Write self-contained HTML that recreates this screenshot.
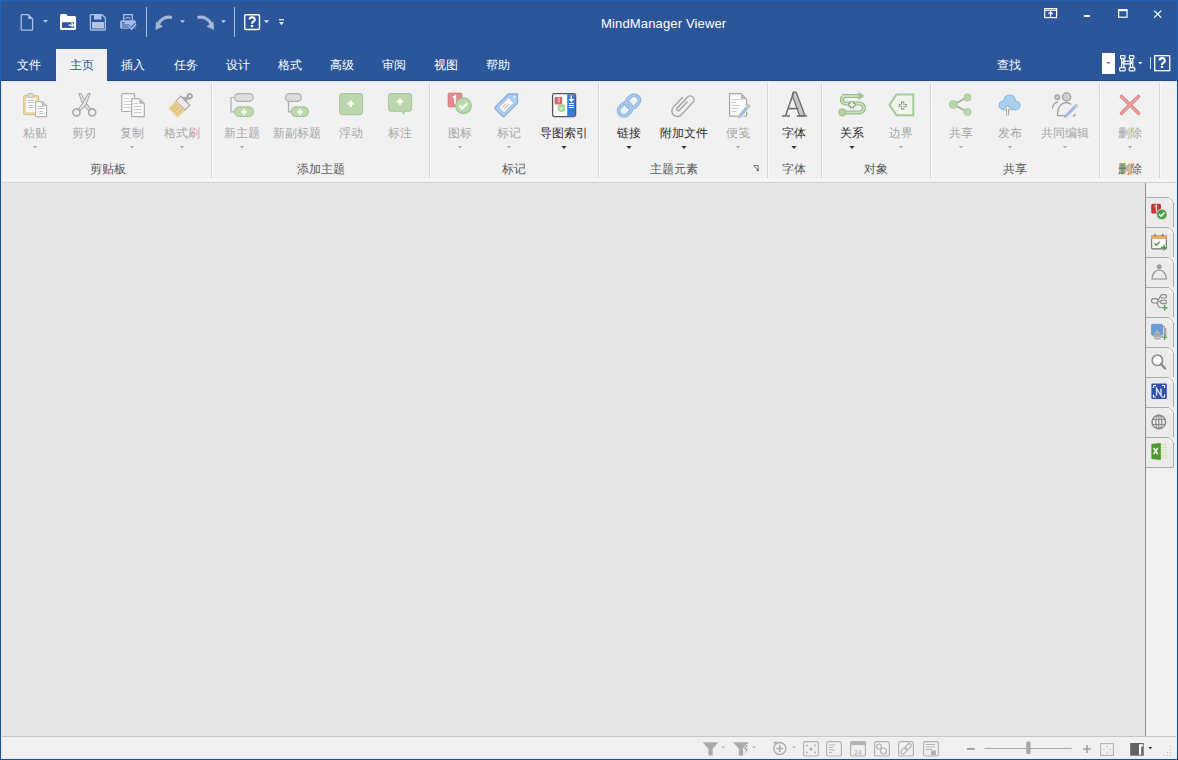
<!DOCTYPE html>
<html><head><meta charset="utf-8">
<style>
*{box-sizing:border-box}
html,body{margin:0;padding:0;width:1178px;height:760px;overflow:hidden;font-family:"Liberation Sans",sans-serif;}
body{position:relative;background:#2b579a}
.a{position:absolute}
.t{position:absolute;font-size:12px;line-height:20px;white-space:nowrap;transform:translateX(-50%)}
.tab{top:55px;color:#fff}
.lbl{top:123px;color:#a6a6a6}
.lbl.en{color:#2e2e2e}
.glbl{top:159px;color:#585858}
#ribbon{left:1px;top:81px;width:1175px;height:102px;background:#f1f1f1;border-bottom:1px solid #d2d2d2}
.sep{position:absolute;top:83px;width:1px;height:95px;background:#d6d6d6;box-shadow:1px 0 0 #fafafa}
#canvas{left:1px;top:183px;width:1144px;height:553px;background:#e6e6e6}
#side{left:1145px;top:183px;width:31px;height:553px;background:#f0f0f0;border-left:1px solid #8f8f8f}
#status{left:1px;top:736px;width:1175px;height:23px;background:#f0f0f0;border-top:1px solid #c6c6c6}
svg{position:absolute;left:0;top:0}
</style></head><body>
<div class="a" style="left:0;top:0;width:1178px;height:1px;background:#2262b8"></div>
<div class="a" style="left:0;top:0;width:1px;height:81px;background:#2262b8"></div>
<div class="a" style="left:1177px;top:0;width:1px;height:81px;background:#2262b8"></div>
<div class="a" style="left:601px;top:16px;font-size:13px;letter-spacing:0.15px;line-height:16px;color:#fff;white-space:nowrap">MindManager Viewer</div>

<div class="a" style="left:56px;top:49px;width:51px;height:33px;background:#f1f1f1"></div>
<div class="t tab" style="left:29px">文件</div>
<div class="t tab" style="left:82px;color:#2b579a">主页</div>
<div class="t tab" style="left:133px">插入</div>
<div class="t tab" style="left:186px">任务</div>
<div class="t tab" style="left:238px">设计</div>
<div class="t tab" style="left:290px">格式</div>
<div class="t tab" style="left:342px">高级</div>
<div class="t tab" style="left:394px">审阅</div>
<div class="t tab" style="left:446px">视图</div>
<div class="t tab" style="left:498px">帮助</div>
<div class="t tab" style="left:1009px">查找</div>

<div class="a" id="ribbon"></div>
<div class="a" style="left:1px;top:80px;width:55px;height:1px;background:#23497e"></div>
<div class="a" style="left:107px;top:80px;width:1069px;height:1px;background:#23497e"></div>
<div class="a" style="left:2px;top:81px;width:54px;height:2px;background:#e6eff9"></div>
<div class="a" style="left:107px;top:81px;width:1069px;height:2px;background:#e6eff9"></div>
<div class="a" style="left:2px;top:179px;width:1174px;height:2px;background:#f7f7f7"></div>
<div class="sep" style="left:211px"></div>
<div class="sep" style="left:429px"></div>
<div class="sep" style="left:598px"></div>
<div class="sep" style="left:767px"></div>
<div class="sep" style="left:821px"></div>
<div class="sep" style="left:930px"></div>
<div class="sep" style="left:1099px"></div>
<div class="sep" style="left:1159px"></div>

<div class="t lbl" style="left:35px">粘贴</div>
<div class="t lbl" style="left:84px">剪切</div>
<div class="t lbl" style="left:132px">复制</div>
<div class="t lbl" style="left:182px">格式刷</div>
<div class="t glbl" style="left:108px">剪贴板</div>

<div class="t lbl" style="left:242px">新主题</div>
<div class="t lbl" style="left:297px">新副标题</div>
<div class="t lbl" style="left:351px">浮动</div>
<div class="t lbl" style="left:400px">标注</div>
<div class="t glbl" style="left:321px">添加主题</div>

<div class="t lbl" style="left:460px">图标</div>
<div class="t lbl" style="left:509px">标记</div>
<div class="t lbl en" style="left:564px">导图索引</div>
<div class="t glbl" style="left:514px">标记</div>

<div class="t lbl en" style="left:629px">链接</div>
<div class="t lbl en" style="left:684px">附加文件</div>
<div class="t lbl" style="left:738px">便笺</div>
<div class="t glbl" style="left:674px">主题元素</div>

<div class="t lbl en" style="left:794px">字体</div>
<div class="t glbl" style="left:794px">字体</div>

<div class="t lbl en" style="left:852px">关系</div>
<div class="t lbl" style="left:901px">边界</div>
<div class="t glbl" style="left:876px">对象</div>

<div class="t lbl" style="left:961px">共享</div>
<div class="t lbl" style="left:1010px">发布</div>
<div class="t lbl" style="left:1065px">共同编辑</div>
<div class="t glbl" style="left:1015px">共享</div>

<div class="t lbl" style="left:1130px">删除</div>
<div class="t glbl" style="left:1130px">删除</div>

<div class="a" id="canvas"></div>
<div class="a" id="side"></div>
<div class="a" id="status"></div>
<div class="a" style="left:1px;top:81px;width:1px;height:678px;background:#d8f0fc"></div>
<div class="a" style="left:1176px;top:81px;width:1px;height:678px;background:#d8f0fc"></div>
<div class="a" style="left:1px;top:758px;width:1176px;height:1px;background:#dceef8"></div>
<div class="a" style="left:0;top:81px;width:1px;height:679px;background:#224e82"></div>
<div class="a" style="left:1177px;top:81px;width:1px;height:679px;background:#224e82"></div>
<div class="a" style="left:0;top:759px;width:1178px;height:1px;background:#224e82"></div>

<svg width="1178" height="760" viewBox="0 0 1178 760">
<!--ICONS-->
<!-- QAT -->
<g fill="none" stroke="#a7bfe6" stroke-width="1.3">
<path d="M22,14.7 h6.3 l4.3,4.3 v10.4 a0.8,0.8 0 0 1 -0.8,0.8 h-9.8 a0.8,0.8 0 0 1 -0.8,-0.8 v-13.9 a0.8,0.8 0 0 1 0.8,-0.8 z"/>
</g>
<path d="M28.3,14.7 v4.3 h4.3 z" fill="#a7bfe6"/>
<polygon points="43,20 48,20 45.5,22.8" fill="#b9cbec"/>
<!-- folder -->
<path d="M60,15.5 a1.5,1.5 0 0 1 1.5,-1.5 h4.5 l1.8,2 h6.7 a1.5,1.5 0 0 1 1.5,1.5 v11 a1.5,1.5 0 0 1 -1.5,1.5 h-13 a1.5,1.5 0 0 1 -1.5,-1.5 z" fill="#fff"/>
<rect x="62" y="22.3" width="12" height="5.6" fill="#2b579a"/>
<path d="M68.5,25.1 h5 M71.5,23 l2,2.1 l-2,2.1" stroke="#fff" stroke-width="1.2" fill="none"/>
<!-- save -->
<path d="M91.2,14.7 h11 l3.1,3.1 v11.4 a0.8,0.8 0 0 1 -0.8,0.8 h-13.3 a0.8,0.8 0 0 1 -0.8,-0.8 v-13.7 a0.8,0.8 0 0 1 0.8,-0.8 z" fill="none" stroke="#a7bfe6" stroke-width="1.3"/>
<rect x="94" y="14.7" width="7.5" height="4.8" fill="#a7bfe6"/>
<rect x="92" y="22" width="12" height="6.5" fill="#b2c4e0"/>
<!-- print -->
<g fill="none" stroke="#a7bfe6" stroke-width="1.3">
<path d="M123.7,20.5 v-5.8 h8.6 v5.8"/>
<path d="M125.8,18.8 c1,-1.8 3,-1.8 4.2,0"/>
</g>
<rect x="120.2" y="20.2" width="15.6" height="8.6" rx="1.6" fill="#a7bfe6"/>
<path d="M122,22.9 h2.5 M122,25 h7.5 M122,27 h6" stroke="#2b579a" stroke-width="1.1"/>
<path d="M129.3,26.6 l2.3,2.5 l4.4,-4.9" stroke="#2b579a" stroke-width="3.6" fill="none"/>
<path d="M129.3,26.6 l2.3,2.5 l4.4,-4.9" stroke="#a7bfe6" stroke-width="1.7" fill="none"/>
<!-- separators -->
<rect x="146" y="7" width="1" height="30" fill="#a9c0e4"/>
<rect x="234" y="7" width="1" height="30" fill="#a9c0e4"/>
<!-- undo -->
<path d="M172,17.5 C166,16 160.5,19 158.5,24" stroke="#a3b6d6" stroke-width="3.2" fill="none"/>
<polygon points="155.5,30 156,21.5 163,26.5" fill="#a3b6d6"/>
<polygon points="180,20.3 185,20.3 182.5,23" fill="#b9cbec"/>
<!-- redo -->
<path d="M197.5,17.5 C203.5,16 209,19 211,24" stroke="#a3b6d6" stroke-width="3.2" fill="none"/>
<polygon points="214,30 213.5,21.5 206.5,26.5" fill="#a3b6d6"/>
<polygon points="221,20.3 226,20.3 223.5,23" fill="#b9cbec"/>
<!-- help -->
<rect x="244.7" y="14.7" width="14.8" height="14.8" rx="1.2" fill="none" stroke="#fff" stroke-width="1.4"/>
<path d="M249.7,19.5 a2.5,2.3 0 1 1 3.6,2.1 c-1,0.6 -1.3,1 -1.3,2.2" stroke="#fff" stroke-width="2" fill="none"/>
<rect x="250.8" y="25" width="2.4" height="2.2" fill="#fff"/>
<polygon points="264,20.3 269,20.3 266.5,23" fill="#dfe8f7"/>
<rect x="279" y="19" width="5" height="1.3" fill="#dfe8f7"/>
<polygon points="279,22 284,22 281.5,25.3" fill="#dfe8f7"/>
<!-- window controls -->
<g fill="none" stroke="#fff" stroke-width="1.2">
<rect x="1044.6" y="8.6" width="12" height="9"/>
<path d="M1044,10.3 h13.2"/>
<path d="M1050.6,17.4 v-5.5 M1048.4,14.1 l2.2,-2.2 l2.2,2.2"/>
<rect x="1118.6" y="9.6" width="8.4" height="7.6"/>
<path d="M1118,10.6 h9.6"/>
<path d="M1154.2,10.6 l7,7 M1161.2,10.6 l-7,7" stroke-width="1.3"/>
</g>
<rect x="1084" y="15" width="6" height="2" fill="#fff"/>
<!-- right of tab row -->
<rect x="1102" y="53" width="13" height="21" fill="#fff"/>
<polygon points="1106.5,62 1110.5,62 1108.5,64.5" fill="#777"/>
<g fill="none" stroke="#fff" stroke-width="1.2">
<rect x="1120.6" y="55.6" width="4.4" height="3" rx="0.6"/>
<rect x="1129.4" y="55.6" width="4.4" height="3" rx="0.6"/>
<path d="M1121.6,58.6 v9 M1124,58.6 v9 M1130.4,58.6 v9 M1132.8,58.6 v9"/>
<rect x="1122.6" y="61.2" width="9.2" height="2.6" rx="1.2"/>
<rect x="1119.6" y="67.6" width="5.6" height="3.2" rx="0.8"/>
<rect x="1129.2" y="67.6" width="5.6" height="3.2" rx="0.8"/>
</g>
<polygon points="1138.3,62 1142.3,62 1140.3,64.5" fill="#fff"/>
<rect x="1150" y="57" width="1" height="12" fill="#c8d6ee"/>
<rect x="1154.7" y="55.7" width="15" height="15" fill="none" stroke="#fff" stroke-width="1.3"/>
<path d="M1159.6,60.5 a2.6,2.4 0 1 1 3.7,2.2 c-1,0.6 -1.3,1 -1.3,2.3" stroke="#fff" stroke-width="2.1" fill="none"/>
<rect x="1160.9" y="65.8" width="2.2" height="2.2" fill="#fff"/>
<!--RIBBON-->
<!-- paste -->
<rect x="23.6" y="95.6" width="15" height="19" rx="1.5" fill="#e6d6a4" stroke="#dac78f" stroke-width="1.2"/>
<rect x="25.8" y="97.8" width="10.5" height="14.5" fill="#f8f8f6"/>
<rect x="28" y="93.6" width="5.5" height="3.6" rx="1" fill="#e2e2e2" stroke="#b5b5b5" stroke-width="1"/>
<path d="M28,100.5 h6 M28,102.5 h6 M29,105.5 h4 M29,107.5 h4" stroke="#c6c6c6" stroke-width="1"/>
<path d="M35.6,101.6 h6.8 l4.2,4.2 v10.8 h-11 z" fill="#fdfdfd" stroke="#b3b3b3" stroke-width="1.1"/>
<path d="M42.4,101.6 v4.2 h4.2" fill="#c8c8c8" stroke="#b3b3b3" stroke-width="0.9"/>
<path d="M37.5,106.5 h6 M37.5,108.5 h7 M39,111.5 h4 M39,113.5 h4" stroke="#c6c6c6" stroke-width="1"/>
<!-- scissors -->
<g stroke="#a9a9a9" stroke-width="1.1" fill="#ececec" stroke-linejoin="round">
<polygon points="78.8,93.6 80.8,93.6 86.6,103.8 90.6,109.4 89,110.6 83.4,105.2"/>
<polygon points="90.2,93.6 88.2,93.6 82.4,103.8 78.4,109.4 80,110.6 85.6,105.2"/>
</g>
<g stroke="#a9a9a9" stroke-width="1.7" fill="none">
<circle cx="76.4" cy="112.4" r="3.5"/>
<circle cx="92.2" cy="112.4" r="3.5"/>
</g>
<!-- copy -->
<rect x="121.7" y="93.7" width="12.8" height="17.8" rx="1" fill="#fdfdfd" stroke="#ababab" stroke-width="1.2"/>
<path d="M124,98.5 h5 M124,101.5 h7 M124,104.5 h7 M124,107.5 h7" stroke="#c8c8c8" stroke-width="1"/>
<path d="M131.7,98.7 h7.6 l5,5 v12.4 a0.6,0.6 0 0 1 -0.6,0.6 h-11.4 a0.6,0.6 0 0 1 -0.6,-0.6 z" fill="#fdfdfd" stroke="#ababab" stroke-width="1.2"/>
<path d="M139.3,98.7 v5 h5 z" fill="#b8b8b8"/>
<path d="M133.8,103.5 h4 M133.8,106.5 h8 M133.8,109.5 h8 M133.8,112.5 h8" stroke="#c8c8c8" stroke-width="1"/>
<!-- format painter -->
<g transform="rotate(45 180 106)">
<circle cx="180" cy="92.3" r="3.2" fill="#a9a9a9"/>
<circle cx="180" cy="92" r="1.1" fill="#f3f3f3"/>
<path d="M178.6,94.5 h2.8 v3 l4,1.5 h-13.6 l4,-1.5 z" fill="#acacac"/>
<rect x="173.6" y="98.6" width="12.8" height="6.6" fill="#ececec" stroke="#a6a6a6" stroke-width="1.1"/>
<path d="M173.2,105.4 h13.6 v9 a1.5,1.5 0 0 1 -1.5,1.5 h-10.6 a1.5,1.5 0 0 1 -1.5,-1.5 z" fill="#e8d095"/>
<path d="M176.5,107.5 v7 M180,107 v7.5 M183.5,107.5 v7" stroke="#d6b66e" stroke-width="1"/>
</g>
<!-- new topic -->
<path d="M234.6,97.5 h-3.6 v14.3 h3.6" stroke="#b0b0b0" stroke-width="1.2" fill="none"/>
<rect x="234.6" y="93.6" width="18.6" height="7.8" rx="3.9" fill="#dedede" stroke="#b3b3b3" stroke-width="1.2"/>
<rect x="234.6" y="106.9" width="19" height="9.6" rx="4.8" fill="#bdd7af" stroke="#aac79b" stroke-width="1.1"/>
<path d="M244,109 v6 M241,112 h6" stroke="#f4fbf0" stroke-width="2.2"/>
<!-- new subtopic -->
<path d="M288.5,101.4 v10.4 h3" stroke="#ababab" stroke-width="1.3" fill="none"/>
<rect x="285.5" y="93.6" width="15.8" height="7.8" rx="3.9" fill="#dcdcdc" stroke="#aeaeae" stroke-width="1.2"/>
<rect x="291.2" y="106.9" width="17.2" height="9.6" rx="4.8" fill="#bdd7af" stroke="#a6c497" stroke-width="1.1"/>
<path d="M300,109 v6 M297,112 h6" stroke="#f4fbf0" stroke-width="2.2"/>
<!-- floating -->
<rect x="339.6" y="93.6" width="23" height="21" rx="3" fill="#bcd6ae" stroke="#aac79b" stroke-width="1.1"/>
<path d="M350.8,100.5 v6.5 M347.5,103.7 h6.5" stroke="#f6fbf3" stroke-width="2.2"/>
<!-- callout -->
<rect x="388.6" y="93.6" width="23" height="17.6" rx="3" fill="#bcd6ae" stroke="#aac79b" stroke-width="1.1"/>
<path d="M400.5,110.5 l3.5,5 l1.5,-5 z" fill="#b5d2a6"/>
<path d="M400,98.5 v6.5 M396.7,101.7 h6.5" stroke="#f6fbf3" stroke-width="2.2"/>
<!-- icons -->
<rect x="448.2" y="93.2" width="13.6" height="13.6" rx="1" fill="#e48a8c" stroke="#d67476" stroke-width="1"/>
<path d="M452.8,97.6 l2.3,-1.4 v8" stroke="#fff3f3" stroke-width="2" fill="none"/>
<circle cx="463.5" cy="105.7" r="7.8" fill="#bad8ab" stroke="#a5c597" stroke-width="1.3"/>
<path d="M459.5,105.6 l2.8,2.8 l5,-5.2" stroke="#f6fff2" stroke-width="2.2" fill="none"/>
<!-- tag -->
<g transform="rotate(-45 509 102.5)">
<path d="M496.5,96 h18 l6.5,6.5 l-6.5,6.5 h-18 a1.8,1.8 0 0 1 -1.8,-1.8 v-9.4 a1.8,1.8 0 0 1 1.8,-1.8 z" fill="#aecdf0" stroke="#8ab2de" stroke-width="1.3"/>
<rect x="498.2" y="98.6" width="14" height="7.8" rx="0.8" fill="#f3f8fd" stroke="#8ab2de" stroke-width="0.7"/>
<path d="M501,101 h5 M501,103.5 h7" stroke="#e4b9a6" stroke-width="1.1"/>
<circle cx="516.8" cy="102.5" r="1.2" fill="#eaf3fc"/>
</g>
<!-- map index -->
<rect x="552.6" y="93.6" width="23" height="23" rx="1.8" fill="#fff" stroke="#555" stroke-width="1.3"/>
<path d="M567.2,94.2 h6.6 a1.2,1.2 0 0 1 1.2,1.2 v20 a1.2,1.2 0 0 1 -1.2,1.2 h-6.6 z" fill="#3d7ad3"/>
<path d="M571.3,95.5 v5.5" stroke="#fff" stroke-width="1.4"/>
<polygon points="568.3,99 574.3,99 571.3,102.3" fill="#fff"/>
<path d="M568.8,103.5 h5 M568.8,105.5 h5 M568.8,107.5 h5" stroke="#fff" stroke-width="1"/>
<rect x="554.6" y="97" width="7.6" height="7.6" rx="0.8" fill="#d46a6c"/>
<path d="M557.8,99 l1.2,-0.7 v4.5" stroke="#fbe" stroke-width="1.2" fill="none"/>
<circle cx="561.5" cy="108" r="4" fill="#a6d796"/>
<path d="M559.8,108 l1.3,1.4 l2.2,-2.4" stroke="#eaffea" stroke-width="1.1" fill="none"/>
<!-- link -->
<g transform="rotate(-45 629 105.5)" fill="none">
<rect x="616.5" y="100.3" width="14" height="10.4" rx="5.2" stroke="#8db3dc" stroke-width="3.8"/>
<rect x="627.5" y="100.3" width="14" height="10.4" rx="5.2" stroke="#8db3dc" stroke-width="3.8"/>
<rect x="616.5" y="100.3" width="14" height="10.4" rx="5.2" stroke="#a6cbef" stroke-width="1.9"/>
<rect x="627.5" y="100.3" width="14" height="10.4" rx="5.2" stroke="#a6cbef" stroke-width="1.9"/>
</g>
<!-- paperclip -->
<g transform="rotate(43 684 105.2)" fill="none" stroke="#a9a9a9" stroke-width="1.5">
<path d="M681,112 V97 a3.8,3.8 0 0 1 7.6,0 V114 a5.5,5.5 0 0 1 -11,0 V100"/>
<path d="M681,112 a1.5,1.5 0 0 0 3,0 V100"/>
</g>
<!-- note -->
<path d="M729.6,93.6 h11.4 l5.6,5.6 v16.4 a0.6,0.6 0 0 1 -0.6,0.6 h-15.8 a0.6,0.6 0 0 1 -0.6,-0.6 z" fill="#fdfdfd" stroke="#a8a8a8" stroke-width="1.3"/>
<path d="M741,93.6 v5.6 h5.6 z" fill="#b8b8b8"/>
<path d="M731.5,99.5 h10 M731.5,102.5 h4 M731.5,105.5 h8 M731.5,108.5 h7 M731.5,111.5 h5" stroke="#c4c4c4" stroke-width="0.9"/>
<g transform="rotate(-50 744.5 110.5)">
<rect x="737" y="108.6" width="12" height="4" fill="#9ebbe2" stroke="#f4f8fc" stroke-width="0.8"/>
<rect x="749" y="108.6" width="3" height="4" fill="#c8c4b8"/>
<polygon points="737,108.6 734,110.6 737,112.6" fill="#b8b8b8"/>
</g>
<!-- font A -->
<polygon points="793.2,92.2 796.2,92.2 805,115.6 799.6,115.6 792.3,95.6" fill="#c4c4c4" stroke="#6c6c6c" stroke-width="1.3" stroke-linejoin="round"/>
<path d="M793.6,92.6 L785.6,115.6" stroke="#6c6c6c" stroke-width="1.5"/>
<path d="M788.6,108.6 h9.6" stroke="#6c6c6c" stroke-width="1.6"/>
<path d="M782,116 h8 M796.8,116 h10" stroke="#6c6c6c" stroke-width="1.7"/>
<!-- relationship -->
<g fill="none">
<path d="M842,96 h19 M845.5,96 a3.75,3.75 0 0 0 0,7.5 h14 a4.45,4.45 0 0 1 0,8.9 h-17" stroke="#9ab98c" stroke-width="4"/>
<path d="M842,96 h19 M845.5,96 a3.75,3.75 0 0 0 0,7.5 h14 a4.45,4.45 0 0 1 0,8.9 h-17" stroke="#c8e0bc" stroke-width="1.8"/>
</g>
<polygon points="858.5,91.8 864.5,96 858.5,100.2" fill="#a5c497"/>
<circle cx="842.3" cy="112.4" r="3.7" fill="#b3d0a5" stroke="#9ab98c" stroke-width="0.8"/>
<path d="M851.8,101.2 v7 M848.3,104.7 h7" stroke="#7f9a74" stroke-width="3.8"/>
<path d="M851.8,102.1 v5.2 M849.2,104.7 h5.2" stroke="#f6fbf2" stroke-width="1.9"/>
<!-- boundary -->
<path d="M896.5,94.6 h16.8 v20.6 h-16.8 l-7,-10.3 z" fill="#eef6ea" stroke="#a9c89a" stroke-width="2"/>
<path d="M902.7,101.5 v8 M898.7,105.5 h8" stroke="#8a8a8a" stroke-width="3.2"/>
<path d="M902.7,102.5 v6 M899.7,105.5 h6" stroke="#fff" stroke-width="1.4"/>
<!-- share -->
<path d="M953.3,104.5 L967.5,97.4 M953.3,104.5 L967.5,112" stroke="#9cb08f" stroke-width="1.6"/>
<circle cx="967.5" cy="97.4" r="3.6" fill="#b9d8a9" stroke="#a6c698" stroke-width="0.8"/>
<circle cx="953.3" cy="104.5" r="4" fill="#b9d8a9" stroke="#a6c698" stroke-width="0.8"/>
<circle cx="967.5" cy="112" r="3.6" fill="#b9d8a9" stroke="#a6c698" stroke-width="0.8"/>
<!-- publish -->
<g fill="#a9cff2" stroke="#8fb6de" stroke-width="1.2">
<circle cx="1003.5" cy="105.3" r="4.3"/>
<circle cx="1015.6" cy="105.3" r="4.3"/>
<circle cx="1009.6" cy="100.8" r="5.8"/>
</g>
<g fill="#a9cff2">
<circle cx="1003.5" cy="105.3" r="3.7"/>
<circle cx="1015.6" cy="105.3" r="3.7"/>
<circle cx="1009.6" cy="100.8" r="5.2"/>
<rect x="1003.5" y="101" width="12" height="8"/>
</g>
<path d="M1003.5,109.6 h12" stroke="#8fb6de" stroke-width="1.2"/>
<path d="M1007.6,115.2 v-8.2 M1004.6,109.8 l3,-3.2 l3,3.2" stroke="#9c9c9c" stroke-width="2.8" fill="none" stroke-linejoin="round"/>
<path d="M1007.6,115.2 v-8.2 M1004.6,109.8 l3,-3.2 l3,3.2" stroke="#f6f6f6" stroke-width="1.1" fill="none"/>
<!-- co-edit -->
<circle cx="1057.3" cy="97.2" r="2.4" fill="#c8c8c8" stroke="#a0a0a0" stroke-width="1.1"/>
<circle cx="1066.6" cy="97" r="4.1" fill="#d0d0d0" stroke="#a0a0a0" stroke-width="1.3"/>
<g fill="none" stroke="#a4a4a4" stroke-width="1.3">
<path d="M1052.6,108.5 a5.5,6.5 0 0 1 5.5,-6.5"/>
<path d="M1057.6,115.6 v-2.5 a8.6,10.5 0 0 1 17.2,0 v2.5 z"/>
</g>
<g transform="rotate(-45 1071.5 110.5)">
<rect x="1063.5" y="106" width="16" height="9" fill="#f1f1f1"/>
<rect x="1064" y="108.6" width="13" height="3.6" fill="#9cbae2" stroke="#eef4fb" stroke-width="0.6"/>
<rect x="1077" y="108.6" width="2.5" height="3.6" fill="#c0c0c0"/>
<polygon points="1064,108.6 1061,110.4 1064,112.2" fill="#a8a8a8"/>
</g>
<!-- delete -->
<path d="M1121.5,96.5 L1138.5,113.3 M1138.5,96.5 L1121.5,113.3" stroke="#d88486" stroke-width="3.6" stroke-linecap="round"/>
<path d="M1121.5,96.5 L1138.5,113.3 M1138.5,96.5 L1121.5,113.3" stroke="#ec9fa1" stroke-width="1.8" stroke-linecap="round"/>
<!-- dropdown arrows -->
<g fill="#ababab">
<polygon points="32.8,146 37.2,146 35.0,148.3"/>
<polygon points="129.8,146 134.2,146 132.0,148.3"/>
<polygon points="179.8,146 184.2,146 182.0,148.3"/>
<polygon points="239.8,146 244.2,146 242.0,148.3"/>
<polygon points="457.8,146 462.2,146 460.0,148.3"/>
<polygon points="506.8,146 511.2,146 509.0,148.3"/>
<polygon points="735.8,146 740.2,146 738.0,148.3"/>
<polygon points="898.8,146 903.2,146 901.0,148.3"/>
<polygon points="958.8,146 963.2,146 961.0,148.3"/>
<polygon points="1007.8,146 1012.2,146 1010.0,148.3"/>
<polygon points="1062.8,146 1067.2,146 1065.0,148.3"/>
<polygon points="1127.8,146 1132.2,146 1130.0,148.3"/>
</g>
<g fill="#333">
<polygon points="561.4,146 566.6,146 564.0,149"/>
<polygon points="626.4,146 631.6,146 629.0,149"/>
<polygon points="681.4,146 686.6,146 684.0,149"/>
<polygon points="791.4,146 796.6,146 794.0,149"/>
<polygon points="849.4,146 854.6,146 852.0,149"/>
</g>
<!-- dialog launcher -->
<path d="M753.5,165.5 h4.5 v4.5 M754,166 l4,4" stroke="#777" stroke-width="1" fill="none"/>
<polygon points="759,171 759,168 756,171" fill="#777"/>
<!--SIDE-->
<path d="M1146,197.5 h22.5 l5,5 v24.5" fill="#ebebeb" stroke="#ababab" stroke-width="1"/>
<rect x="1146" y="198" width="27.5" height="29" fill="#ebebeb"/>
<path d="M1146,197.5 h22.5 l5,5 v24.5" fill="none" stroke="#ababab" stroke-width="1"/>
<path d="M1168.5,197.5 v5.5 h5" fill="#f6f6f6" stroke="none"/>
<path d="M1146,227.5 h22.5 l5,5 v24.5" fill="#ebebeb" stroke="#ababab" stroke-width="1"/>
<rect x="1146" y="228" width="27.5" height="29" fill="#ebebeb"/>
<path d="M1146,227.5 h22.5 l5,5 v24.5" fill="none" stroke="#ababab" stroke-width="1"/>
<path d="M1168.5,227.5 v5.5 h5" fill="#f6f6f6" stroke="none"/>
<path d="M1146,257.5 h22.5 l5,5 v24.5" fill="#ebebeb" stroke="#ababab" stroke-width="1"/>
<rect x="1146" y="258" width="27.5" height="29" fill="#ebebeb"/>
<path d="M1146,257.5 h22.5 l5,5 v24.5" fill="none" stroke="#ababab" stroke-width="1"/>
<path d="M1168.5,257.5 v5.5 h5" fill="#f6f6f6" stroke="none"/>
<path d="M1146,287.5 h22.5 l5,5 v24.5" fill="#ebebeb" stroke="#ababab" stroke-width="1"/>
<rect x="1146" y="288" width="27.5" height="29" fill="#ebebeb"/>
<path d="M1146,287.5 h22.5 l5,5 v24.5" fill="none" stroke="#ababab" stroke-width="1"/>
<path d="M1168.5,287.5 v5.5 h5" fill="#f6f6f6" stroke="none"/>
<path d="M1146,317.5 h22.5 l5,5 v24.5" fill="#ebebeb" stroke="#ababab" stroke-width="1"/>
<rect x="1146" y="318" width="27.5" height="29" fill="#ebebeb"/>
<path d="M1146,317.5 h22.5 l5,5 v24.5" fill="none" stroke="#ababab" stroke-width="1"/>
<path d="M1168.5,317.5 v5.5 h5" fill="#f6f6f6" stroke="none"/>
<path d="M1146,347.5 h22.5 l5,5 v24.5" fill="#ebebeb" stroke="#ababab" stroke-width="1"/>
<rect x="1146" y="348" width="27.5" height="29" fill="#ebebeb"/>
<path d="M1146,347.5 h22.5 l5,5 v24.5" fill="none" stroke="#ababab" stroke-width="1"/>
<path d="M1168.5,347.5 v5.5 h5" fill="#f6f6f6" stroke="none"/>
<path d="M1146,377.5 h22.5 l5,5 v24.5" fill="#ebebeb" stroke="#ababab" stroke-width="1"/>
<rect x="1146" y="378" width="27.5" height="29" fill="#ebebeb"/>
<path d="M1146,377.5 h22.5 l5,5 v24.5" fill="none" stroke="#ababab" stroke-width="1"/>
<path d="M1168.5,377.5 v5.5 h5" fill="#f6f6f6" stroke="none"/>
<path d="M1146,407.5 h22.5 l5,5 v24.5" fill="#ebebeb" stroke="#ababab" stroke-width="1"/>
<rect x="1146" y="408" width="27.5" height="29" fill="#ebebeb"/>
<path d="M1146,407.5 h22.5 l5,5 v24.5" fill="none" stroke="#ababab" stroke-width="1"/>
<path d="M1168.5,407.5 v5.5 h5" fill="#f6f6f6" stroke="none"/>
<path d="M1146,437.5 h22.5 l5,5 v24.5" fill="#ebebeb" stroke="#ababab" stroke-width="1"/>
<rect x="1146" y="438" width="27.5" height="29" fill="#ebebeb"/>
<path d="M1146,437.5 h22.5 l5,5 v24.5" fill="none" stroke="#ababab" stroke-width="1"/>
<path d="M1168.5,437.5 v5.5 h5" fill="#f6f6f6" stroke="none"/>
<path d="M1146,467.5 h27.5" stroke="#ababab" stroke-width="1"/>
<!-- side icon 1: red 1 + check -->
<rect x="1151.2" y="203.8" width="9.8" height="9.8" rx="1.5" fill="#c2353b"/>
<path d="M1154.8,206.6 l1.6,-1 v6" stroke="#f8dada" stroke-width="1.4" fill="none"/>
<circle cx="1161.8" cy="214.4" r="5.3" fill="#4f9d4a" stroke="#ebebeb" stroke-width="0.8"/>
<path d="M1159.2,214.3 l1.8,1.9 l3.4,-3.6" stroke="#fff" stroke-width="1.6" fill="none"/>
<!-- calendar -->
<rect x="1151.7" y="235.7" width="14.6" height="13.2" rx="1" fill="#fff" stroke="#707070" stroke-width="1.1"/>
<rect x="1151.2" y="235.2" width="15.6" height="3.8" fill="#e6ab68"/>
<path d="M1155,233.8 v2.5 M1162.8,233.8 v2.5" stroke="#707070" stroke-width="1.2"/>
<path d="M1154.5,243.3 l2,2 l3.3,-3.6" stroke="#4b9a45" stroke-width="1.4" fill="none"/>
<path d="M1164,244.5 v6 M1161,247.5 h6" stroke="#4b9a45" stroke-width="1.3"/>
<!-- person -->
<circle cx="1159.2" cy="266.8" r="2.5" fill="#a2a2a2"/>
<path d="M1152,279 a7.2,9 0 0 1 14.4,0 z" fill="none" stroke="#8c8c8c" stroke-width="1.2"/>
<!-- map structure -->
<g fill="none" stroke="#8a8a8a" stroke-width="1.1">
<rect x="1151.5" y="298.6" width="6.6" height="4.4" rx="2.2"/>
<rect x="1160.6" y="294.6" width="6" height="3.4" rx="1.7"/>
<rect x="1160.6" y="300.2" width="6" height="3.4" rx="1.7"/>
<path d="M1158.1,300.8 c1.2,0 1,-4.5 2.5,-4.5 M1158.1,300.8 c1.2,0 1,1.1 2.5,1.1 M1157.5,303 c0,3 1,4.5 3.5,4.5"/>
</g>
<path d="M1164.6,304.8 v6 M1161.6,307.8 h6" stroke="#4b9a45" stroke-width="1.3"/>
<!-- image -->
<path d="M1162.5,326.5 h1.8 v10 M1165.8,328 v8.5" stroke="#8c8c8c" stroke-width="1" fill="none"/>
<path d="M1153.5,336.8 h9 M1154.5,338.8 h6" stroke="#8c8c8c" stroke-width="1"/>
<rect x="1151.5" y="324.3" width="11" height="11" rx="1" fill="#6a9ad8" stroke="#5a88c8" stroke-width="0.6"/>
<path d="M1153.5,334.5 l3.8,-5.2 l3.8,5.2 z" fill="#b4b0a8"/>
<path d="M1164.6,334.6 v5.4 M1161.9,337.3 h5.4" stroke="#4b9a45" stroke-width="1.1"/>
<!-- magnifier -->
<circle cx="1157.4" cy="360.3" r="5.2" fill="#fff" stroke="#8a8a8a" stroke-width="1.6"/>
<path d="M1161,364 l4,4.5" stroke="#8a8a8a" stroke-width="2.4" stroke-linecap="round"/>
<!-- N frame -->
<rect x="1151.4" y="383.5" width="15.4" height="15.4" rx="1" fill="#2f4fb0"/>
<path d="M1153.5,388 v-2.5 h2.5 M1162,385.5 h2.5 v2.5 M1164.5,394.5 v2.5 h-2.5 M1156,397 h-2.5 v-2.5" stroke="#fff" stroke-width="1.1" fill="none"/>
<path d="M1156.6,395.5 v-7 l4.4,7 v-7" stroke="#dfe6f6" stroke-width="1.4" fill="none"/>
<!-- globe -->
<circle cx="1158.8" cy="422" r="6.8" fill="none" stroke="#8a8a8a" stroke-width="1.5"/>
<ellipse cx="1158.8" cy="422" rx="3" ry="6.8" fill="none" stroke="#8a8a8a" stroke-width="1.2"/>
<path d="M1152.3,419.5 h13 M1152.3,424.5 h13 M1158.8,415.3 v13.4" stroke="#8a8a8a" stroke-width="1.2"/>
<!-- excel -->
<path d="M1160,445 h7 M1160,447.5 h7 M1160,450 h7 M1160,452.5 h7 M1160,455 h7 M1160,457.5 h7" stroke="#c8dc7a" stroke-width="1.2" stroke-dasharray="1.5 1"/>
<path d="M1151.4,444 l9.4,-1 v17 l-9.4,-1 z" fill="#4e9a2c"/>
<path d="M1153.6,447.8 l4.2,6.4 M1157.8,447.8 l-4.2,6.4" stroke="#fff" stroke-width="1.5"/>
<!--STATUS-->
<g fill="#ababab">
<path d="M702.6,742.2 h15.9 l-5.8,6.5 v6.7 h-4.3 v-6.7 z"/>
<polygon points="721.3,746.5 725.3,746.5 723.3,748.3"/>
<path d="M733,742.2 h15.9 l-5.8,6.5 v6.7 h-4.3 v-6.7 z"/>
<polygon points="752,746.5 756,746.5 754,748.3"/>
<polygon points="792,746.5 796,746.5 794,748.3"/>
<polygon points="1148.3,747 1152.3,747 1150.3,749.3" fill="#333"/>
</g>
<path d="M746.5,744.5 l-3.5,5.2 h2.6 l-1.8,5.8 l5,-6.8 h-2.6 l2.3,-4.2 z" fill="#9c9c9c" stroke="#f0f0f0" stroke-width="0.9"/>
<circle cx="779.8" cy="748.5" r="6" fill="none" stroke="#ababab" stroke-width="1.3"/>
<path d="M779.8,745 v7 M776.3,748.5 h7" stroke="#ababab" stroke-width="1.6"/>
<polygon points="773,741.8 777.5,741.5 775,744.5" fill="#ababab"/>
<g fill="none" stroke="#b3b3b3" stroke-width="1.2">
<rect x="803.6" y="741.6" width="14.8" height="14.4" rx="1.5"/>
<rect x="826.6" y="741.6" width="14.8" height="14.4" rx="1.5"/>
<rect x="850.6" y="741.6" width="14.8" height="14.4" rx="1.5"/>
<rect x="874.6" y="741.6" width="14.8" height="14.4" rx="1.5"/>
<rect x="898.6" y="741.6" width="14.8" height="14.4" rx="1.5"/>
<rect x="923.6" y="741.6" width="14.8" height="14.4" rx="1.5"/>
<path d="M829,745 h6 M829,747.5 h4 M829,750 h6 M829,752.5 h3"/>
<path d="M926,744.5 h9 M926,747 h9 M926,749.5 h6"/>
<circle cx="879" cy="746.5" r="2.5"/>
<circle cx="883.5" cy="751" r="3"/>
<g transform="rotate(-45 906 748.8)"><rect x="899.5" y="746.8" width="7" height="4" rx="2"/><rect x="905.5" y="746.8" width="7" height="4" rx="2"/></g>
</g>
<circle cx="811" cy="749" r="1.6" fill="#b3b3b3"/>
<circle cx="807" cy="745.5" r="1" fill="#b3b3b3"/><circle cx="815" cy="745.5" r="1" fill="#b3b3b3"/>
<circle cx="807" cy="752.5" r="1" fill="#b3b3b3"/><circle cx="815" cy="752.5" r="1" fill="#b3b3b3"/>
<rect x="850.6" y="741.6" width="14.8" height="3.5" fill="#b3b3b3"/>
<text x="858" y="754.5" font-family="Liberation Sans" font-size="7" fill="#a8a8a8" text-anchor="middle">24</text>
<rect x="931" y="750.5" width="5" height="4.5" fill="#b3b3b3"/>
<rect x="967" y="748" width="7.7" height="1.8" fill="#9a9a9a"/>
<rect x="984.6" y="748" width="87" height="1" fill="#a8a8a8"/>
<rect x="1026.3" y="741.6" width="4.2" height="12.5" fill="#a8a8a8"/>
<path d="M1087,745 v8 M1083,749 h8" stroke="#a0a0a0" stroke-width="1.6"/>
<rect x="1100.6" y="743.6" width="12.8" height="11.8" fill="none" stroke="#b3b3b3" stroke-width="1.1"/>
<path d="M1107,746 v1.5 M1107,751.5 v1.5 M1103,749.5 h1.5 M1109.5,749.5 h1.5" stroke="#b3b3b3" stroke-width="1"/>
<rect x="1130.2" y="743" width="13.5" height="12.7" fill="#626262"/>
<path d="M1139,744.2 h3.8 v2.2 h-1.6 v8.3 h-2.2 z" fill="#fff"/>
<g fill="#b9b9b9">
<rect x="1170" y="746" width="1" height="1"/><rect x="1170" y="749" width="1" height="1"/><rect x="1170" y="752" width="1" height="1"/><rect x="1170" y="755" width="1" height="1"/>
<rect x="1167" y="752" width="1" height="1"/><rect x="1167" y="755" width="1" height="1"/>
<rect x="1164" y="755" width="1" height="1"/>
</g>
</svg>
</body></html>
